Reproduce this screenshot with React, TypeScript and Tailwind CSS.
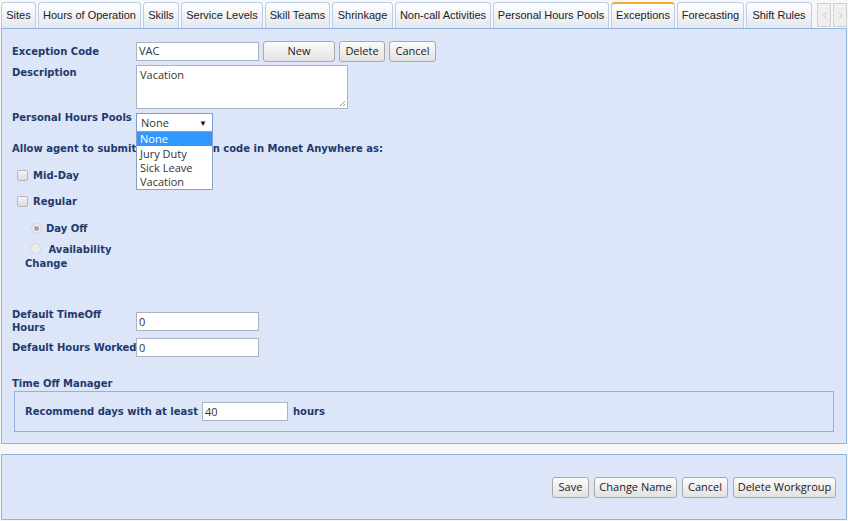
import { ChevronLeft, ChevronRight } from "lucide-react";

const tabs = [
  { name: "Sites", w: "w-[35px]" },
  { name: "Hours of Operation", w: "w-[103px]" },
  { name: "Skills", w: "w-[36px]" },
  { name: "Service Levels", w: "w-[82px]" },
  { name: "Skill Teams", w: "w-[65px]" },
  { name: "Shrinkage", w: "w-[61px]" },
  { name: "Non-call Activities", w: "w-[96px]" },
  { name: "Personal Hours Pools", w: "w-[116px]" },
  { name: "Exceptions", w: "w-[64px]", active: true },
  { name: "Forecasting", w: "w-[67px]" },
  { name: "Shift Rules", w: "w-[66px]" },
];

const labelCls =
  "font-['DejaVu_Sans',sans-serif] font-bold text-[10px] leading-[13px] text-[#1f3a6d]";
const fieldText = "font-['Open_Sans',sans-serif] text-[11px] leading-[14px] text-[#333]";
const inputCls =
  "h-[19px] bg-white border border-[#a9b4c4] flex items-center pl-[2px] " + fieldText;
const btnCls =
  "h-[21px] flex items-center justify-center rounded-[3px] border border-[#a9a9a9] bg-gradient-to-b from-[#fbfbfb] to-[#e2e2e2] font-['Open_Sans',sans-serif] text-[11px] text-[#222]";

function Checkbox() {
  return (
    <span className="ml-[5px] mr-[5px] w-[11px] h-[11px] rounded-[2px] border border-[#b8b8b8] bg-gradient-to-b from-[#f4f4f4] to-[#dcdcdc] shrink-0" />
  );
}

function Radio({ on }: { on?: boolean }) {
  return (
    <span className="ml-[5px] mr-[4px] w-[11px] h-[11px] rounded-full border border-[#d4d4d4] bg-[#ececec] shrink-0 inline-flex items-center justify-center align-[-1px]">
      {on && <span className="w-[5px] h-[5px] rounded-full bg-[#a8a8a8]" />}
    </span>
  );
}

export default function App() {
  return (
    <div className="w-[848px] h-[521px] bg-[#f7f7f7] overflow-hidden">
      {/* tab strip */}
      <div className="h-[28px] flex items-end pl-[1px] gap-[2px] font-['Liberation_Sans',sans-serif] text-[11px] text-[#222]">
        {tabs.map((t) => (
          <div
            key={t.name}
            className={`${t.w} h-[26px] flex items-center justify-center rounded-t-[4px] border border-b-0 border-[#b9cfe9] bg-gradient-to-b from-[#ffffff] to-[#e3e7ef] ${
              t.active ? "border-t-2 border-t-[#f3a737] pb-[1px]" : ""
            }`}
          >
            {t.name}
          </div>
        ))}
        <div className="flex gap-[2px] ml-[3px] mb-[1px]">
          <div className="w-[14px] h-[24px] border border-[#cfcfcf] bg-[#efefef] flex items-center justify-center text-[#bdbdbd]">
            <ChevronLeft size={11} strokeWidth={2} />
          </div>
          <div className="w-[14px] h-[24px] border border-[#cfcfcf] bg-[#efefef] flex items-center justify-center text-[#bdbdbd]">
            <ChevronRight size={11} strokeWidth={2} />
          </div>
        </div>
      </div>

      {/* main panel */}
      <div className="ml-[1px] w-[846px] h-[416px] border border-[#8fb2e0] bg-[#dce6f8] pl-[10px] pt-[12px]">
        <div className="flex items-center h-[20px]">
          <div className={`w-[124px] ${labelCls}`}>Exception Code</div>
          <div className={`w-[123px] ${inputCls}`}>VAC</div>
          <div className={`ml-[4px] w-[72px] ${btnCls}`}>New</div>
          <div className={`ml-[4px] w-[46px] ${btnCls}`}>Delete</div>
          <div className={`ml-[4px] w-[47px] ${btnCls}`}>Cancel</div>
        </div>

        <div className="flex mt-[4px]">
          <div className={`w-[124px] pt-[1px] ${labelCls}`}>Description</div>
          <div className="relative w-[212px] h-[44px] bg-white border border-[#a9b4c4] pl-[3px] pt-[2px]">
            <div className={fieldText}>Vacation</div>
            <svg className="absolute right-[1px] bottom-[1px]" width="7" height="7" viewBox="0 0 7 7">
              <path d="M6 1 L1 6 M6 4 L4 6" stroke="#999" strokeWidth="1" />
            </svg>
          </div>
        </div>

        <div className="flex mt-[4px] h-[18px]">
          <div className={`w-[124px] -mt-[2px] ${labelCls}`}>Personal Hours Pools</div>
          <div className="relative">
            <div className="w-[77px] h-[19px] bg-white border border-[#7b9fd4] flex items-center justify-between pl-[4px] pr-[5px]">
              <span className={fieldText}>None</span>
              <span className="text-[8px] leading-[10px] text-[#111]">▼</span>
            </div>
            <div className="absolute left-0 top-[18px] w-[77px] bg-white border border-[#8aa1c4] z-10">
              <div className="h-[14px] bg-[#3297fd] text-white pl-[3px] flex items-center font-['Open_Sans',sans-serif] text-[11px]">
                None
              </div>
              <div className={`h-[15px] pl-[3px] flex items-center ${fieldText}`}>Jury Duty</div>
              <div className={`h-[14px] pl-[3px] flex items-center ${fieldText}`}>Sick Leave</div>
              <div className={`h-[14px] pl-[3px] flex items-center ${fieldText}`}>Vacation</div>
            </div>
          </div>
        </div>

        <div className={`mt-[11px] ${labelCls} leading-[14px]`}>
          Allow agent to submit this exception code in Monet Anywhere as:
        </div>

        <div className={`mt-[12px] flex items-center h-[14px] ${labelCls}`}>
          <Checkbox />
          Mid-Day
        </div>
        <div className={`mt-[12px] flex items-center h-[14px] ${labelCls}`}>
          <Checkbox />
          Regular
        </div>
        <div className={`mt-[13px] ml-[14px] flex items-center h-[14px] ${labelCls}`}>
          <Radio on />
          Day Off
        </div>
        <div className={`mt-[8px] ml-[13px] w-[100px] ${labelCls} leading-[14px]`}>
          <Radio /> Availability Change
        </div>

        <div className="flex mt-[37px]">
          <div className={`w-[124px] ${labelCls}`}>
            Default TimeOff
            <br />
            Hours
          </div>
          <div className={`mt-[4px] w-[123px] ${inputCls}`}>0</div>
        </div>
        <div className="flex items-center mt-[4px]">
          <div className={`w-[124px] whitespace-nowrap ${labelCls}`}>Default Hours Worked</div>
          <div className={`w-[123px] ${inputCls}`}>0</div>
        </div>

        <div className={`mt-[20px] ${labelCls}`}>Time Off Manager</div>
        <div className="mt-[1px] ml-[2px] w-[820px] h-[41px] border border-[#8fb2e0] flex items-center pl-[10px]">
          <span className={labelCls}>Recommend days with at least</span>
          <div className={`ml-[4px] w-[86px] ${inputCls}`}>40</div>
          <span className={`ml-[5px] ${labelCls}`}>hours</span>
        </div>
      </div>

      {/* bottom panel */}
      <div className="mt-[10px] ml-[1px] w-[846px] h-[66px] border border-[#8fb2e0] bg-[#dce6f8] flex items-center justify-end pr-[10px] gap-[5px]">
        <div className={`w-[37px] ${btnCls}`}>Save</div>
        <div className={`w-[83px] ${btnCls}`}>Change Name</div>
        <div className={`w-[46px] ${btnCls}`}>Cancel</div>
        <div className={`w-[103px] ${btnCls}`}>Delete Workgroup</div>
      </div>
    </div>
  );
}
